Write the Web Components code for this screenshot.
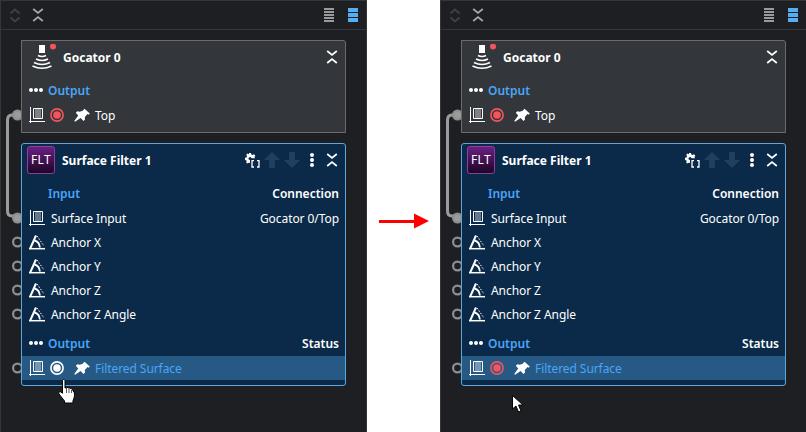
<!DOCTYPE html>
<html>
<head>
<meta charset="utf-8">
<style>
  html, body { margin: 0; height: 432px; overflow: hidden; background: #fff; }
  body { display: flex; font: 12px/16px "Noto Sans", "Open Sans", sans-serif; color: #fff; }
</style>
</head>
<body>
<script>
(function () {
  const ICONS = {
    expand: '<svg width="12" height="15" viewBox="0 0 12 15" fill="none" stroke="currentColor" stroke-width="2"><path d="M1.500 5.500 6 1.500l4.500 4M1.500 9.500 6 13.500l4.500-4"/></svg>',
    collapse: '<svg width="12" height="14" viewBox="0 0 12 14" fill="none" stroke="currentColor" stroke-width="1.700"><path d="M1.200 1 6 5 10.800 1M1.200 13 6 9l4.800 4"/></svg>',
    list: '<svg width="10" height="14" viewBox="0 0 10 14" fill="currentColor"><rect width="10" height="2"/><rect y="3" width="10" height="2"/><rect y="6" width="10" height="2"/><rect y="9" width="10" height="2"/><rect y="12" width="10" height="2"/></svg>',
    blocks: '<svg width="10" height="14" viewBox="0 0 10 14" fill="currentColor"><rect width="10" height="4"/><rect y="5" width="10" height="4"/><rect y="10" width="10" height="4"/></svg>',
    surface: '<svg width="16" height="16" viewBox="0 0 16 16" fill="none" stroke="currentColor"><path d="M1.500 0v16M0 14.500h16"/><path d="M4.500 1.500h9v10h-9z"/><path d="M7 2v9M9 2v9M11 2v9" stroke-opacity=".75"/></svg>',
    angle: '<svg width="16" height="16" viewBox="0 0 16 16" fill="none" stroke="currentColor"><path d="M1 15 7 1.500" stroke-width="2"/><path d="M0 14.700h16" stroke-width="1.500"/><path d="M8 2 15 12" stroke-dasharray="1.500 1.500"/><path d="M5.500 6.500c3 .6 5 3.400 5.400 7" stroke-width="1.800"/></svg>',
    status: '<svg width="14" height="14" viewBox="0 0 14 14"><circle cx="7" cy="7" r="6.100" fill="none" stroke="currentColor" stroke-width="1.600"/><circle cx="7" cy="7" r="3.800" fill="currentColor"/></svg>',
    pin: '<svg width="16" height="14" viewBox="0 0 16 14" fill="currentColor"><path d="M10.500.800 15.800 5.600 14.800 6.700 13.600 6 10.800 9 11 11.500 9.500 13 6.600 10 1 13.800.3 13.100 4.200 7.600 1.800 4.800 3.300 3.300 5.800 3.800 9.200 2.400 9.300 2z"/></svg>',
    gear: '<svg width="15" height="15" viewBox="0 0 15 15"><path fill="currentColor" d="M4 0h2l.3 1.500 1.300.5 1.300-.8 1.400 1.400-.8 1.300.5 1.300h-5v4.800l-1.600-.2-1.300.8-1-1.400.8-1.300L.4 6.900 0 6.700v-2l1.500-.3.500-1.300-.8-1.300 1.400-1.400 1.300.8L4 1.500z"/><circle cx="5" cy="5.500" r="1.500" fill="#0b2a4a"/><path fill="none" stroke="currentColor" stroke-width="1.300" d="M9 7.700H7V14h2M12 7.700h2V14h-2"/></svg>',
    up: '<svg width="16" height="16" viewBox="0 0 16 16" fill="currentColor"><path d="M8 0 16 8H11V16H5V8H0z"/></svg>',
    down: '<svg width="16" height="16" viewBox="0 0 16 16" fill="currentColor"><path d="M8 16 0 8H5V0H11V8H16z"/></svg>',
    more: '<svg width="4" height="14" viewBox="0 0 4 14" fill="currentColor"><circle cx="2" cy="2" r="2"/><circle cx="2" cy="7" r="2"/><circle cx="2" cy="12" r="2"/></svg>',
    dots: '<svg width="14" height="4" viewBox="0 0 14 4" fill="currentColor"><circle cx="2" cy="2" r="2"/><circle cx="7" cy="2" r="2"/><circle cx="12" cy="2" r="2"/></svg>',
    scanner: '<svg width="25" height="26" viewBox="0 0 25 26" fill="none" stroke="currentColor" stroke-width="1.600"><rect x="7" y="1" width="6" height="8" fill="currentColor" stroke="none"/><path d="M6 11.500q4 2 8 0M4 15q6 3 12 0M2 18.500q8 4 16 0M.5 22q9.500 4.500 19 0"/><circle cx="21" cy="2.500" r="3" fill="#f4555c" stroke="none"/></svg>',
  };

  class UiIcon extends HTMLElement {
    constructor() {
      super();
      this.attachShadow({ mode: 'open' });
    }

    connectedCallback() {
      this.shadowRoot.innerHTML = `
        <style>:host { display: inline-flex; flex: none; } svg { display: block; }</style>
        ${ICONS[this.getAttribute('name')]}
      `;
    }
  }

  const nodeTemplate = document.createElement('template');
  nodeTemplate.innerHTML = `
    <style>
      :host {
        display: block;
        background: #33363b;
        border: 1px solid #6c6c6c;
        border-radius: 0 3px 0 0;
        padding-bottom: 5px;
      }
      :host([active]) {
        background: #0b2a4a;
        border-color: #5ba7de;
        border-radius: 3px;
      }
      .head {
        display: flex;
        align-items: center;
        height: 32px;
        padding-right: 7px;
        margin-bottom: 5px;
      }
      .title { font-weight: 700; white-space: nowrap; flex: 1; padding-top: 2px; }
      ::slotted([slot='logo']) { margin-right: 7px; }
    </style>
    <div class="head">
      <slot name="logo"></slot>
      <span class="title"><slot name="title"></slot></span>
      <slot name="tools"></slot>
    </div>
    <slot></slot>
  `;

  class NodeCard extends HTMLElement {
    constructor() {
      super();
      this.attachShadow({ mode: 'open' });
      this.shadowRoot.append(nodeTemplate.content.cloneNode(true));
    }
  }

  const sectionTemplate = document.createElement('template');
  sectionTemplate.innerHTML = `
    <style>
      :host {
        display: flex;
        align-items: center;
        justify-content: space-between;
        height: 24px;
        margin-bottom: 1px;
        padding: 0 6px 0 7px;
      }
      .name { display: flex; align-items: center; gap: 5px; color: #4aa5f7; font-weight: 600; }
      .text { padding-top: 2px; }
      .spacer { width: 14px; display: flex; color: #fff; }
      .side { font-weight: 600; padding-top: 2px; }
    </style>
    <div class="name"><span class="spacer"><slot name="lead"></slot></span><span class="text"><slot></slot></span></div>
    <span class="side"><slot name="side"></slot></span>
  `;

  class NodeSection extends HTMLElement {
    constructor() {
      super();
      this.attachShadow({ mode: 'open' });
      this.shadowRoot.append(sectionTemplate.content.cloneNode(true));
    }
  }

  const rowTemplate = document.createElement('template');
  rowTemplate.innerHTML = `
    <style>
      :host {
        display: flex;
        align-items: center;
        position: relative;
        height: 24px;
        padding: 0 6px 0 7px;
        letter-spacing: -.07px;
      }
      :host([hot]) { background: #265a85; }
      .port { position: absolute; left: -11px; top: 6px; z-index: -1; display: block; }
      .main { display: flex; align-items: center; flex: 1; white-space: nowrap; }
      .side { white-space: nowrap; padding-top: 2px; }
      :host([linked]) .port circle { fill: #9b9b9b; }
      ::slotted(ui-icon) { margin-right: 6px; }
      ::slotted(ui-icon[name='status']) { margin: 0 5px 0 -1px; }
      ::slotted(ui-icon[name='pin']) { margin: 0 5px 0 5px; }
      ::slotted(span) { padding-top: 2px; }
    </style>
    <svg class="port" width="12" height="12" viewBox="0 0 12 12">
      <circle cx="6.500" cy="6" r="4.400" fill="none" stroke="#8f8f8f" stroke-width="2.200"></circle>
    </svg>
    <div class="main"><slot></slot></div>
    <span class="side"><slot name="side"></slot></span>
  `;

  class PortRow extends HTMLElement {
    constructor() {
      super();
      this.attachShadow({ mode: 'open' });
      this.shadowRoot.append(rowTemplate.content.cloneNode(true));
    }
  }

  const panelTemplate = document.createElement('template');
  panelTemplate.innerHTML = `
    <style>
      :host {
        display: block;
        flex: none;
        width: 367px;
        height: 432px;
        box-sizing: border-box;
        background: #1e1f23;
        border-top: 1px solid #34363a;
        border-left: 1px solid #34363a;
        border-right: 1px solid #34363a;
      }
      .tools {
        display: flex;
        align-items: center;
        height: 28px;
        padding: 0 8px;
        border-bottom: 1px solid #34363a;
      }
      .tools ui-icon:nth-child(1) { color: #3f4145; margin-right: 11px; }
      .tools ui-icon:nth-child(2) { color: #aaa; }
      .tools .grow { flex: 1; }
      .tools ui-icon:nth-child(4) { color: #9a9a9a; margin-right: 14px; }
      .tools ui-icon:nth-child(5) { color: #55aef2; }
      .canvas {
        position: relative;
        isolation: isolate;
        display: flex;
        flex-direction: column;
        gap: 10px;
        padding: 10px 20px 0 20px;
      }
      .wire { position: absolute; left: 0; top: 0; z-index: -1; }
      ::slotted(.pointer) { position: absolute; }
    </style>
    <div class="tools">
      <ui-icon name="expand"></ui-icon>
      <ui-icon name="collapse"></ui-icon>
      <span class="grow"></span>
      <ui-icon name="list"></ui-icon>
      <ui-icon name="blocks"></ui-icon>
    </div>
    <div class="canvas">
      <svg class="wire" width="24" height="200" viewBox="0 0 24 200" fill="none" stroke="#9b9b9b" stroke-width="3">
        <path d="M16 85H11Q6.500 85 6.500 90V181Q6.500 186 11 186H16"></path>
      </svg>
      <slot></slot>
    </div>
  `;

  class FlowPanel extends HTMLElement {
    constructor() {
      super();
      this.attachShadow({ mode: 'open' });
      this.shadowRoot.append(panelTemplate.content.cloneNode(true));
    }
  }

  const logoTemplate = document.createElement('template');
  logoTemplate.innerHTML = `
    <style>
      :host {
        display: flex;
        align-items: center;
        justify-content: center;
        width: 28px;
        height: 28px;
        box-sizing: border-box;
        margin-left: 5px;
        border: 1px solid #8d3f9f;
        border-radius: 3px;
        background: linear-gradient(#6b1f82, #1c0524);
        font-size: 12px;
        letter-spacing: .3px;
      }
    </style>
    <slot></slot>
  `;

  class FltLogo extends HTMLElement {
    constructor() {
      super();
      this.attachShadow({ mode: 'open' });
      this.shadowRoot.append(logoTemplate.content.cloneNode(true));
    }
  }

  const arrowTemplate = document.createElement('template');
  arrowTemplate.innerHTML = `
    <style>
      :host { display: flex; flex: none; width: 73px; justify-content: center; padding-top: 213px; height: 16px; }
      svg { display: block; }
    </style>
    <svg width="50" height="16" viewBox="0 0 50 16" fill="#f00"><path d="M0 7h35V0.500L50 8 35 15.500V10H0z"></path></svg>
  `;

  class StepArrow extends HTMLElement {
    constructor() {
      super();
      this.attachShadow({ mode: 'open' });
      this.shadowRoot.append(arrowTemplate.content.cloneNode(true));
    }
  }

  customElements.define('ui-icon', UiIcon);
  customElements.define('node-card', NodeCard);
  customElements.define('node-section', NodeSection);
  customElements.define('port-row', PortRow);
  customElements.define('flow-panel', FlowPanel);
  customElements.define('flt-logo', FltLogo);
  customElements.define('step-arrow', StepArrow);

  const panel = (statusColor, cursor) => `
    <flow-panel>
      <node-card>
        <ui-icon slot="logo" name="scanner" style="margin:0 6px 0 10px"></ui-icon>
        <span slot="title">Gocator 0</span>
        <ui-icon slot="tools" name="collapse"></ui-icon>
        <node-section><ui-icon slot="lead" name="dots"></ui-icon>Output</node-section>
        <port-row linked>
          <ui-icon name="surface"></ui-icon>
          <ui-icon name="status" style="color:#f4555c"></ui-icon>
          <ui-icon name="pin"></ui-icon>
          <span>Top</span>
        </port-row>
      </node-card>
      <node-card active>
        <flt-logo slot="logo">FLT</flt-logo>
        <span slot="title">Surface Filter 1</span>
        <span slot="tools" style="display:flex;align-items:center">
          <ui-icon name="gear" style="margin-right:4px"></ui-icon>
          <ui-icon name="up" style="color:#1f4060;margin-right:4px"></ui-icon>
          <ui-icon name="down" style="color:#1f4060;margin-right:10px"></ui-icon>
          <ui-icon name="more" style="margin-right:12px"></ui-icon>
          <ui-icon name="collapse"></ui-icon>
        </span>
        <node-section>Input<span slot="side">Connection</span></node-section>
        <port-row linked><ui-icon name="surface"></ui-icon><span>Surface Input</span><span slot="side">Gocator 0/Top</span></port-row>
        <port-row><ui-icon name="angle"></ui-icon><span>Anchor X</span></port-row>
        <port-row><ui-icon name="angle"></ui-icon><span>Anchor Y</span></port-row>
        <port-row><ui-icon name="angle"></ui-icon><span>Anchor Z</span></port-row>
        <port-row><ui-icon name="angle"></ui-icon><span>Anchor Z Angle</span></port-row>
        <node-section style="margin-top:5px"><ui-icon slot="lead" name="dots"></ui-icon>Output<span slot="side">Status</span></node-section>
        <port-row hot>
          <ui-icon name="surface"></ui-icon>
          <ui-icon name="status" style="color:${statusColor}"></ui-icon>
          <ui-icon name="pin"></ui-icon>
          <span style="color:#4aa5f7">Filtered Surface</span>
        </port-row>
      </node-card>
      ${cursor}
    </flow-panel>
  `;

  const hand = `<svg class="pointer" style="left:57px;top:349px" width="18" height="25" viewBox="0 0 18 25">
    <path fill="#fff" stroke="#000" d="M4.500 1.500c0-1.300 2.500-1.300 2.500 0V9l1.500-.5c.8-.2 1.500 0 1.700.6 .8-.4 1.700-.2 2 .5 .8-.3 1.800 0 2 .8L16.500 14c.3 3-.5 5.500-1.500 7.500v2.500H6.500v-2L1 15c-1-1.500 .5-3 2-2l1.500 1.300z"/>
    <path stroke="#555" fill="none" d="M8.500 9v5M11 10v4M13.500 11v3"/></svg>`;
  const arrow = `<svg class="pointer" style="left:71px;top:365px" width="11" height="18" viewBox="0 0 11 18">
    <path fill="#fff" stroke="#000" d="M.5.500V14l3.500-3 2.500 6 2.500-1-2.500-6h4.500z"/></svg>`;

  document.body.innerHTML = panel('#fff', hand) + '<step-arrow></step-arrow>' + panel('#f4555c', arrow);
})();
</script>
</body>
</html>
